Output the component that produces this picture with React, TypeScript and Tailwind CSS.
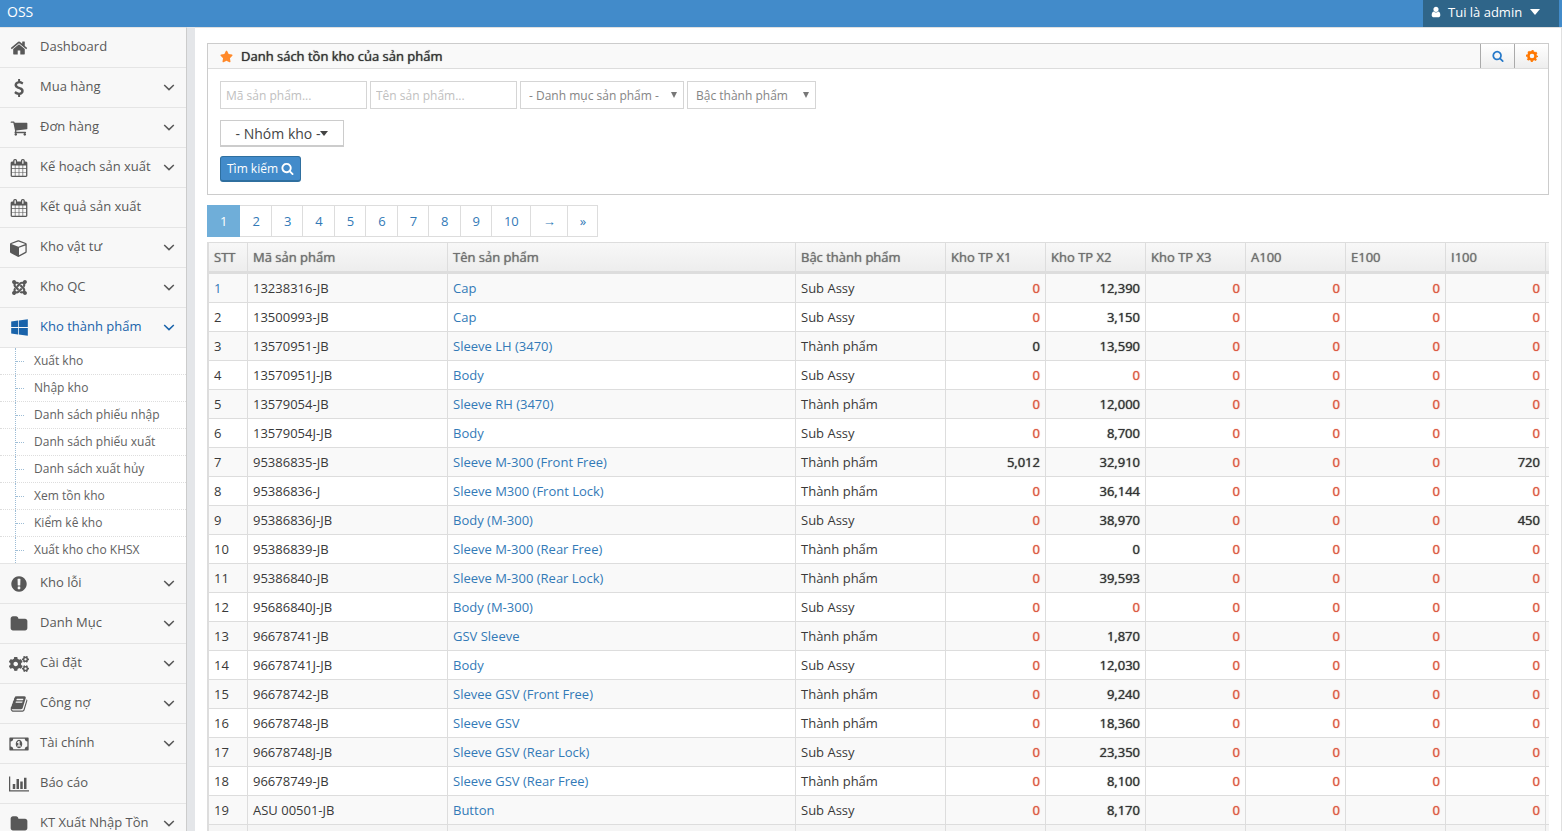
import { useState } from 'react';
import type { ReactNode } from 'react';
import { FaCogs, FaJoomla, FaStar, FaWindows } from 'react-icons/fa';
import clsx from 'clsx';

interface GlyphProps {
  d: string;
  viewBox?: string;
  className?: string;
}

function Glyph({ d, viewBox = '0 0 1792 1792', className = 'h-[18px] w-[18px]' }: GlyphProps) {
  return (
    <svg viewBox={viewBox} fill="currentColor" className={className} aria-hidden="true">
      <path d={d} />
    </svg>
  );
}

const HOME = 'M1472 992v480q0 26-19 45t-45 19h-384v-384h-256v384h-384q-26 0-45-19t-19-45v-480q0-1 .5-3t.5-3l575-474 575 474q1 2 1 6zm223-69l-62 74q-8 9-21 11h-3q-13 0-21-7l-692-577-692 577q-12 8-24 7-13-2-21-11l-62-74q-8-10-7-23.5t11-21.5l719-599q32-26 76-26t76 26l244 204v-195q0-14 9-23t23-9h192q14 0 23 9t9 23v408l219 182q10 8 11 21.5t-7 23.5z';
const DOLLAR = 'M1362 1185q0 153-99.5 263.5t-258.5 136.5v175q0 14-9 23t-23 9h-135q-13 0-22.5-9.5t-9.5-22.5v-175q-66-9-127.5-31t-101.5-44.5-74-48-46.5-37.5-17.5-18q-17-21-2-41l103-135q7-10 23-12 15-2 24 9l2 2q113 99 243 125 37 8 74 8 81 0 142.5-43t61.5-122q0-28-15-53t-33.5-42-58.5-37.5-66-32-80-32.5q-39-16-61.5-25t-61.5-26.5-62.5-31-56.5-35.5-53.5-42.5-43.5-49-35.5-58-21-66.5-8.5-78q0-138 98-242t255-134v-180q0-13 9.5-22.5t22.5-9.5h135q14 0 23 9t9 23v176q57 6 110.5 23t87 33.5 63.5 37.5 39 29 15 14q17 18 5 38l-81 146q-8 15-23 16-14 3-27-7-3-3-14.5-12t-39-26.5-58.5-32-74.5-26-85.5-11.5q-95 0-155 43t-60 111q0 26 8.5 48t29.5 41.5 39.5 33 56 31 60.5 27 70 27.5q53 20 81 31.5t76 35 75.5 42.5 62 50 53 63.5 31.5 76.5 13 94z';
const CART = 'M704 1536q0 52-38 90t-90 38-90-38-38-90 38-90 90-38 90 38 38 90zm896 0q0 52-38 90t-90 38-90-38-38-90 38-90 90-38 90 38 38 90zm128-1088v512q0 24-16.5 42.5t-40.5 21.5l-1044 122q13 60 13 70 0 16-24 64h920q26 0 45 19t19 45-19 45-45 19h-1024q-26 0-45-19t-19-45q0-11 8-31.5t16-36 21.5-40 15.5-29.5l-177-823h-204q-26 0-45-19t-19-45 19-45 45-19h256q16 0 28.5 6.5t19.5 15.5 13 24.5 8 26 5.5 29.5 4.5 26h1201q26 0 45 19t19 45z';
const CALENDAR = 'M192 1664h288v-288h-288v288zm352 0h320v-288h-320v288zm-352-352h288v-320h-288v320zm352 0h320v-320h-320v320zm-352-384h288v-288h-288v288zm736 736h320v-288h-320v288zm-384-736h320v-288h-320v288zm768 736h288v-288h-288v288zm-384-352h320v-320h-320v320zm-352-864v-288q0-13-9.5-22.5t-22.5-9.5h-64q-13 0-22.5 9.5t-9.5 22.5v288q0 13 9.5 22.5t22.5 9.5h64q13 0 22.5-9.5t9.5-22.5zm736 864h288v-320h-288v320zm-384-384h320v-288h-320v288zm384 0h288v-288h-288v288zm32-480v-288q0-13-9.5-22.5t-22.5-9.5h-64q-13 0-22.5 9.5t-9.5 22.5v288q0 13 9.5 22.5t22.5 9.5h64q13 0 22.5-9.5t9.5-22.5zm384-64v1280q0 52-38 90t-90 38h-1408q-52 0-90-38t-38-90v-1280q0-52 38-90t90-38h128v-96q0-66 47-113t113-47h64q66 0 113 47t47 113v96h384v-96q0-66 47-113t113-47h64q66 0 113 47t47 113v96h128q52 0 90 38t38 90z';
const CUBE = 'M896 1629l640-349v-636l-640 233v752zm-64-865l698-254-698-254-698 254zm832-252v768q0 35-18 65t-49 47l-704 384q-28 16-61 16t-61-16l-704-384q-31-17-49-47t-18-65v-768q0-40 23-73t61-47l704-256q22-8 44-8t44 8l704 256q38 14 61 47t23 73z';
const ALERT = 'M896 128q209 0 385.5 103t279.5 279.5 103 385.5-103 385.5-279.5 279.5-385.5 103-385.5-103-279.5-279.5-103-385.5 103-385.5 279.5-279.5 385.5-103zm128 1247v-190q0-14-9-23.5t-22-9.5h-192q-13 0-23 10t-10 23v190q0 13 10 23t23 10h192q13 0 22-9.5t9-23.5zm-2-344l18-621q0-12-10-18-10-8-24-8h-220q-14 0-24 8-10 6-10 18l17 621q0 10 10 17.5t24 7.5h185q14 0 23.5-7.5t10.5-17.5z';
const FOLDER = 'M1728 608v704q0 92-66 158t-158 66h-1216q-92 0-158-66t-66-158v-960q0-92 66-158t158-66h320q92 0 158 66t66 158v32h672q92 0 158 66t66 158z';
const BOOK = 'M1703 478q40 57 18 129l-275 906q-19 64-76.5 107.5t-122.5 43.5h-923q-77 0-148.5-53.5t-99.5-131.5q-24-67-2-127 0-4 3-27t4-37q1-8-3-21.5t-3-19.5q2-11 8-21t16.5-23.5 16.5-23.5q23-38 45-91.5t30-91.5q3-10 .5-30t-.5-28q3-11 17-28t17-23q21-36 42-92t25-90q1-9-2.5-32t.5-28q4-13 22-30.5t22-22.5q19-26 42.5-84.5t27.5-96.5q1-8-3-25.5t-2-26.5q2-8 9-18t18-23 17-21q8-12 16.5-30.5t15-35 16-36 19.5-32 26.5-23.5 36-11.5 47.5 5.5l-1 3q38-9 51-9h761q74 0 114 56t18 130l-274 906q-36 119-71.5 153.5t-128.5 34.5h-869q-27 0-38 15-11 16-1 43 24 70 144 70h923q29 0 56-15.5t35-41.5l300-987q7-22 5-57 38 15 59 43zm-1064 2q-4 13 2 22.5t20 9.5h608q13 0 25.5-9.5t16.5-22.5l21-64q4-13-2-22.5t-20-9.5h-608q-13 0-25.5 9.5t-16.5 22.5zm-83 256q-4 13 2 22.5t20 9.5h608q13 0 25.5-9.5t16.5-22.5l21-64q4-13-2-22.5t-20-9.5h-608q-13 0-25.5 9.5t-16.5 22.5z';
const MONEY = 'M768 1152h384v-96h-128v-448h-114l-148 137 77 80q42-37 55-57h2v288h-128v96zm512-256q0 70-21 142t-59.5 134-101.5 101-138 39-138-39-101.5-101-59.5-134-21-142 21-142 59.5-134 101.5-101 138-39 138 39 101.5 101 59.5 134 21 142zm512 256v-512q-106 0-181-75t-75-181h-1152q0 106-75 181t-181 75v512q106 0 181 75t75 181h1152q0-106 75-181t181-75zm128-832v1152q0 26-19 45t-45 19h-1792q-26 0-45-19t-19-45v-1152q0-26 19-45t45-19h1792q26 0 45 19t19 45z';
const CHART = 'M640 896v512h-256v-512h256zm384-512v1024h-256v-1024h256zm1024 1152v128h-2048v-1536h128v1408h1920zm-640-896v768h-256v-768h256zm384-384v1152h-256v-1152h256z';
const SEARCH = 'M1216 832q0-185-131.5-316.5t-316.5-131.5-316.5 131.5-131.5 316.5 131.5 316.5 316.5 131.5 316.5-131.5 131.5-316.5zm512 832q0 52-38 90t-90 38q-54 0-90-38l-343-342q-179 124-399 124-143 0-273.5-55.5t-225-150-150-225-55.5-273.5 55.5-273.5 150-225 225-150 273.5-55.5 273.5 55.5 225 150 150 225 55.5 273.5q0 220-124 399l343 343q37 37 37 90z';
const USER = 'M1536 1399q0 109-62.5 187t-150.5 78h-854q-88 0-150.5-78t-62.5-187q0-85 8.5-160.5t31.5-152 58.5-131 94-89 134.5-34.5q131 128 313 128t313-128q76 0 134.5 34.5t94 89 58.5 131 31.5 152 8.5 160.5zm-256-887q0 159-112.5 271.5t-271.5 112.5-271.5-112.5-112.5-271.5 112.5-271.5 271.5-112.5 271.5 112.5 112.5 271.5z';

interface MenuItem {
  label: string;
  icon: ReactNode;
  open?: boolean;
  leaf?: boolean;
  children?: string[];
}

const MENU: MenuItem[] = [
  { label: 'Dashboard', icon: <Glyph d={HOME} />, leaf: true },
  { label: 'Mua hàng', icon: <Glyph d={DOLLAR} /> },
  { label: 'Đơn hàng', icon: <Glyph d={CART} /> },
  { label: 'Kế hoạch sản xuất', icon: <Glyph d={CALENDAR} /> },
  { label: 'Kết quả sản xuất', icon: <Glyph d={CALENDAR} />, leaf: true },
  { label: 'Kho vật tư', icon: <Glyph d={CUBE} /> },
  { label: 'Kho QC', icon: <FaJoomla size={17} /> },
  {
    label: 'Kho thành phẩm',
    icon: <FaWindows size={19} />,
    open: true,
    children: [
      'Xuất kho',
      'Nhập kho',
      'Danh sách phiếu nhập',
      'Danh sách phiếu xuất',
      'Danh sách xuất hủy',
      'Xem tồn kho',
      'Kiểm kê kho',
      'Xuất kho cho KHSX',
    ],
  },
  { label: 'Kho lỗi', icon: <Glyph d={ALERT} /> },
  { label: 'Danh Mục', icon: <Glyph d={FOLDER} /> },
  { label: 'Cài đặt', icon: <FaCogs size={20} /> },
  { label: 'Công nợ', icon: <Glyph d={BOOK} /> },
  { label: 'Tài chính', icon: <Glyph d={MONEY} viewBox="0 0 1920 1792" className="h-[18px] w-5" /> },
  { label: 'Báo cáo', icon: <Glyph d={CHART} viewBox="0 0 2048 1792" className="h-[18px] w-5" />, leaf: true },
  { label: 'KT Xuất Nhập Tồn', icon: <Glyph d={FOLDER} /> },
];

const PANEL_TITLE = 'Danh sách tồn kho của sản phẩm';
const PAGES = ['1', '2', '3', '4', '5', '6', '7', '8', '9', '10', '→', '»'];
const HEADERS = ['STT', 'Mã sản phẩm', 'Tên sản phẩm', 'Bậc thành phẩm', 'Kho TP X1', 'Kho TP X2', 'Kho TP X3', 'A100', 'E100', 'I100'];

interface Row {
  code: string;
  name: string;
  level: string;
  x1?: string;
  x2: string;
  i100?: string;
}

const SUB = 'Sub Assy';
const TP = 'Thành phẩm';

const ROWS: Row[] = [
  { code: '13238316-JB', name: 'Cap', level: SUB, x2: '12,390' },
  { code: '13500993-JB', name: 'Cap', level: SUB, x2: '3,150' },
  { code: '13570951-JB', name: 'Sleeve LH (3470)', level: TP, x1: '0', x2: '13,590' },
  { code: '13570951J-JB', name: 'Body', level: SUB, x2: '' },
  { code: '13579054-JB', name: 'Sleeve RH (3470)', level: TP, x2: '12,000' },
  { code: '13579054J-JB', name: 'Body', level: SUB, x2: '8,700' },
  { code: '95386835-JB', name: 'Sleeve M-300 (Front Free)', level: TP, x1: '5,012', x2: '32,910', i100: '720' },
  { code: '95386836-J', name: 'Sleeve M300 (Front Lock)', level: TP, x2: '36,144' },
  { code: '95386836J-JB', name: 'Body (M-300)', level: SUB, x2: '38,970', i100: '450' },
  { code: '95386839-JB', name: 'Sleeve M-300 (Rear Free)', level: TP, x2: '0' },
  { code: '95386840-JB', name: 'Sleeve M-300 (Rear Lock)', level: TP, x2: '39,593' },
  { code: '95686840J-JB', name: 'Body (M-300)', level: SUB, x2: '' },
  { code: '96678741-JB', name: 'GSV Sleeve', level: TP, x2: '1,870' },
  { code: '96678741J-JB', name: 'Body', level: SUB, x2: '12,030' },
  { code: '96678742-JB', name: 'Slevee GSV (Front Free)', level: TP, x2: '9,240' },
  { code: '96678748-JB', name: 'Sleeve GSV', level: TP, x2: '18,360' },
  { code: '96678748J-JB', name: 'Sleeve GSV (Rear Lock)', level: SUB, x2: '23,350' },
  { code: '96678749-JB', name: 'Sleeve GSV (Rear Free)', level: TP, x2: '8,100' },
  { code: 'ASU 00501-JB', name: 'Button', level: SUB, x2: '8,170' },
];

function Sidebar() {
  return (
    <nav className="w-[187px] shrink-0 border-r border-t border-r-[#ccc] border-t-[#e5e5e5] bg-[#f8f8f8]">
      <ul>
        {MENU.map((item) => (
          <li key={item.label}>
            <a
              href="#"
              className={clsx(
                'flex h-10 items-center border-b border-[#e5e5e5] pr-[11px]',
                item.open ? 'text-[#1963aa]' : 'text-[#585858]',
              )}
            >
              <span className="flex w-[38px] shrink-0 justify-center">{item.icon}</span>
              <span className="ml-0.5 flex-1 whitespace-nowrap pb-1">{item.label}</span>
              {!item.leaf && (
                <svg viewBox="0 0 12 12" fill="none" stroke="currentColor" strokeWidth="1.5" className="h-3 w-3" aria-hidden="true">
                  <path d="M1.2 3l4.8 4.6L10.800 3" />
                </svg>
              )}
            </a>
            {item.children && (
              <ul className="border-b border-[#e5e5e5] bg-white">
                {item.children.map((child, i) => (
                  <li key={child} className={clsx('flex items-stretch', i > 0 && 'border-t border-dotted border-[#ddd]')}>
                    <span className="ml-[15px] flex w-[9px] items-center border-l border-dotted border-[#9dbdd6]">
                      <span className="w-full border-t border-dotted border-[#9dbdd6]" />
                    </span>
                    <a href="#" className="flex h-[26px] items-center pl-[10px] text-xs text-[#616161]">{child}</a>
                  </li>
                ))}
              </ul>
            )}
          </li>
        ))}
      </ul>
    </nav>
  );
}

function Filter({ label, className }: { label: string; className: string }) {
  return (
    <span className={clsx('relative', className)}>
      <select aria-label={label} className="h-7 w-full appearance-none border border-[#d5d5d5] bg-white pl-2 pt-px text-xs text-[#858585]">
        <option>{label}</option>
      </select>
      <svg viewBox="0 0 6 6" fill="#777" className="pointer-events-none absolute right-[7px] top-[11px] h-1.5 w-1.5" aria-hidden="true">
        <path d="M0 0h6L3 6z" />
      </svg>
    </span>
  );
}

function SearchPanel() {
  return (
    <section className="border border-[#ccc] bg-white">
      <header className="flex h-[25px] items-stretch border-b border-[#ddd] bg-[#f9f9f9]">
        <h1 className="flex flex-1 items-center pl-3 text-[13px] text-[#333] [text-shadow:0_0_1px_currentColor]">
          <FaStar size={13} className="mr-2 text-[#ff892a]" />
          {PANEL_TITLE}
        </h1>
        <button aria-label="Tìm kiếm" className="flex w-[34px] items-center justify-center border-l border-[#aaa] bg-linear-to-b from-white to-[#eee] text-[#2679c9]">
          <Glyph d={SEARCH} className="h-3 w-3" />
        </button>
        <button aria-label="Cài đặt" className="flex w-[34px] items-center justify-center border-l border-[#aaa] bg-linear-to-b from-white to-[#eee] text-[#f70]">
          <svg viewBox="0 0 12 12" fill="none" stroke="currentColor" className="h-3 w-3" aria-hidden="true">
            <circle cx="6" cy="6" r="3.6" strokeWidth="2.6" />
            <circle cx="6" cy="6" r="5.2" strokeWidth="1.6" strokeDasharray="2.04 2.04" strokeDashoffset="1" />
          </svg>
        </button>
      </header>
      <form className="p-3" onSubmit={(e) => e.preventDefault()}>
        <div className="flex flex-wrap gap-[3px]">
          <input aria-label="Mã sản phẩm" placeholder="Mã sản phẩm..." className="h-7 w-[147px] border border-[#d5d5d5] px-[5px] pt-px text-xs placeholder:text-[#c0c0c0]" />
          <input aria-label="Tên sản phẩm" placeholder="Tên sản phẩm..." className="h-7 w-[147px] border border-[#d5d5d5] px-[5px] pt-px text-xs placeholder:text-[#c0c0c0]" />
          <Filter label="- Danh mục sản phẩm -" className="w-[164px]" />
          <Filter label="Bậc thành phẩm" className="w-[129px]" />
        </div>
        <button type="button" className="mt-[11px] flex h-[27px] w-[124px] items-center justify-center border border-b-2 border-[#ccc] bg-white pt-px text-sm text-[#444]">
          - Nhóm kho -
          <svg viewBox="0 0 8 5" fill="currentColor" className="h-[5px] w-2" aria-hidden="true">
            <path d="M0 0h8L4 5z" />
          </svg>
        </button>
        <button type="submit" className="mt-[9px] flex h-[26px] items-center gap-[3px] rounded-[3px] border border-b-2 border-[#2f6f9f] bg-[#428bca] px-1.5 text-xs text-white">
          Tìm kiếm
          <Glyph d={SEARCH} className="h-[13px] w-[13px]" />
        </button>
      </form>
    </section>
  );
}

function Pagination() {
  const [page, setPage] = useState('1');

  return (
    <nav className="mt-2.5 flex text-[#337ab7]">
      {PAGES.map((p) => (
        <button
          key={p}
          onClick={() => setPage(p)}
          className={clsx(
            'h-8 border-y border-r pl-3 pr-[11px] first:border-l first:pr-3',
            p === page ? 'border-[#6faed9] bg-[#6faed9] text-white' : 'border-[#ddd] bg-white',
          )}
        >
          {p}
        </button>
      ))}
    </nav>
  );
}

function Quantity({ value }: { value?: string }) {
  return (
    <td className={clsx('border-b border-l border-[#ddd] px-[5px] text-right [text-shadow:0_0_1px_currentColor]', value ? 'text-[#333]' : 'text-[#dd5a43]')}>
      {value || '0'}
    </td>
  );
}

function StockTable() {
  return (
    <div className="mt-[5px] overflow-hidden">
      <table className="w-[1438px] table-fixed border-separate border-spacing-0 border-l border-[#ddd]">
        <colgroup>
          <col className="w-[39px]" />
          <col className="w-[200px]" />
          <col className="w-[348px]" />
          <col className="w-[150px]" />
          <col span={7} className="w-[100px]" />
        </colgroup>
        <thead>
          <tr className="h-8 bg-linear-to-b from-[#f8f8f8] to-[#ececec] text-left text-[#707070]">
            {HEADERS.map((h) => (
              <th key={h} className="border-b-3 border-l border-t border-[#ddd] px-[5px] font-normal [text-shadow:0_0_1px_currentColor]">{h}</th>
            ))}
            <td className="border-b-3 border-l border-t border-[#ddd]" />
          </tr>
        </thead>
        <tbody className="text-[#393939]">
          {ROWS.map((row, i) => (
            <tr key={row.code} className="h-[29px] odd:bg-[#f9f9f9]">
              <td className={clsx('border-b border-l border-[#ddd] px-[5px]', i === 0 && 'text-[#337ab7]')}>{i + 1}</td>
              <td className="border-b border-l border-[#ddd] px-[5px]">{row.code}</td>
              <td className="border-b border-l border-[#ddd] px-[5px]">
                <a href="#" className="text-[#337ab7]">{row.name}</a>
              </td>
              <td className="border-b border-l border-[#ddd] px-[5px]">{row.level}</td>
              <Quantity value={row.x1} />
              <Quantity value={row.x2} />
              <Quantity />
              <Quantity />
              <Quantity />
              <Quantity value={row.i100} />
              <td className="border-b border-l border-[#ddd]" />
            </tr>
          ))}
          <tr className="h-[29px] bg-[#f5f5f5]">
            {[...HEADERS, ''].map((h) => (
              <td key={h} className="border-b border-l border-[#ddd]" />
            ))}
          </tr>
        </tbody>
      </table>
    </div>
  );
}

export default function App() {
  return (
    <div className="flex h-screen flex-col overflow-hidden bg-white font-['Open_Sans',sans-serif] text-[13px] leading-5">
      <div className="flex h-[27px] shrink-0 items-stretch justify-between bg-[#428bca] text-white">
        <a href="#" className="flex items-center pb-1 pl-[7px] text-sm">OSS</a>
        <button className="mr-[3px] flex w-[136px] items-center bg-[#2f6589] pb-1 pl-[7px]">
          <Glyph d={USER} className="h-3 w-3" />
          <span className="ml-1.5">Tui là admin</span>
          <svg viewBox="0 0 10 6" fill="currentColor" className="ml-2 h-1.5 w-2.5" aria-hidden="true">
            <path d="M0 0h10L5 6z" />
          </svg>
        </button>
      </div>
      <div className="flex min-h-0 flex-1">
        <Sidebar />
        <div className="w-2 shrink-0 bg-[#e4e6e9]" />
        <main className="min-w-0 flex-1 border-r border-t border-[#e0e0e0] px-3 pt-[15px]">
          <SearchPanel />
          <Pagination />
          <StockTable />
        </main>
      </div>
    </div>
  );
}
